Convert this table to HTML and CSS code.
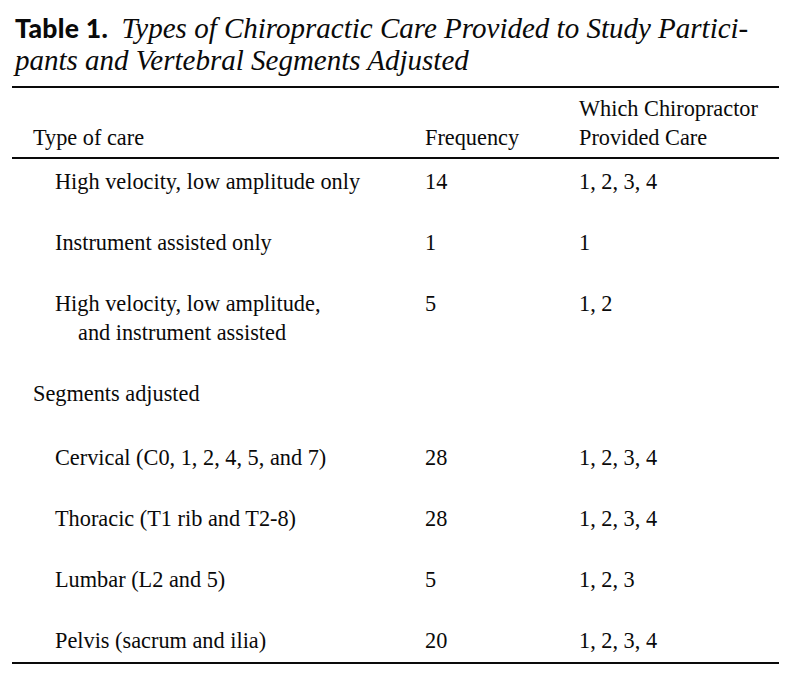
FILE: index.html
```html
<!DOCTYPE html>
<html lang="en">
<head>
<meta charset="utf-8">
<title>Table 1</title>
<link rel="stylesheet" href="styles.css">
</head>
<body>
<div class="page">
  <p class="caption"><span class="label">Table 1.</span> <span class="title">Types of Chiropractic Care Provided to Study Partici-<br>pants and Vertebral Segments Adjusted</span></p>
  <table class="data">
    <colgroup>
      <col class="c1"><col class="c2"><col class="c3">
    </colgroup>
    <thead>
      <tr>
        <th class="first">Type of care</th>
        <th>Frequency</th>
        <th>Which Chiropractor<br>Provided Care</th>
      </tr>
    </thead>
    <tbody>
      <tr><td class="ind">High velocity, low amplitude only</td><td>14</td><td>1, 2, 3, 4</td></tr>
      <tr><td class="ind">Instrument assisted only</td><td>1</td><td>1</td></tr>
      <tr><td class="ind hang">High velocity, low amplitude,<br>and instrument assisted</td><td>5</td><td>1, 2</td></tr>
      <tr class="section"><td class="first">Segments adjusted</td><td></td><td></td></tr>
      <tr><td class="ind">Cervical (C0, 1, 2, 4, 5, and 7)</td><td>28</td><td>1, 2, 3, 4</td></tr>
      <tr><td class="ind">Thoracic (T1 rib and T2-8)</td><td>28</td><td>1, 2, 3, 4</td></tr>
      <tr><td class="ind">Lumbar (L2 and 5)</td><td>5</td><td>1, 2, 3</td></tr>
      <tr class="last"><td class="ind">Pelvis (sacrum and ilia)</td><td>20</td><td>1, 2, 3, 4</td></tr>
    </tbody>
  </table>
</div>
</body>
</html>
```
FILE: styles.css
```css
* { box-sizing: border-box; }
html, body { margin: 0; padding: 0; background: #fff; }
body { color: #0a0a0a; }

.page {
  width: 800px;
  padding: 12px 21px 0 12px;
}

.caption {
  margin: 0 0 10px 3px;
  font-size: 29px;
  line-height: 32px;
  white-space: nowrap;
}
.label {
  font-family: "Lato", "Open Sans", sans-serif;
  font-weight: 900;
  font-size: 26.5px;
  letter-spacing: 0.3px;
}
.title {
  font-family: "Liberation Serif", "Times New Roman", serif;
  font-style: italic;
  margin-left: 6px;
}

.data {
  width: 767px;
  border-collapse: collapse;
  border-top: 2.5px solid #0a0a0a;
  border-bottom: 2.5px solid #0a0a0a;
  font-family: "Liberation Serif", "Times New Roman", serif;
  font-size: 22.3px;
  line-height: 29px;
}
.c1 { width: 413px; }
.c2 { width: 154px; }
.data th {
  font-weight: normal;
  text-align: left;
  vertical-align: bottom;
  padding: 6px 0 5px 0;
  border-bottom: 2.5px solid #0a0a0a;
}
.data td {
  vertical-align: top;
  padding: 8px 0 24px 0;
}
.data th.first, .data td.first { padding-left: 21px; }
.data td.ind { padding-left: 43px; }
.data td.hang { padding-left: 66px; text-indent: -23px; }
.data tr.section td { padding-bottom: 27px; }
.data tr.last td { padding-bottom: 7px; }
```
